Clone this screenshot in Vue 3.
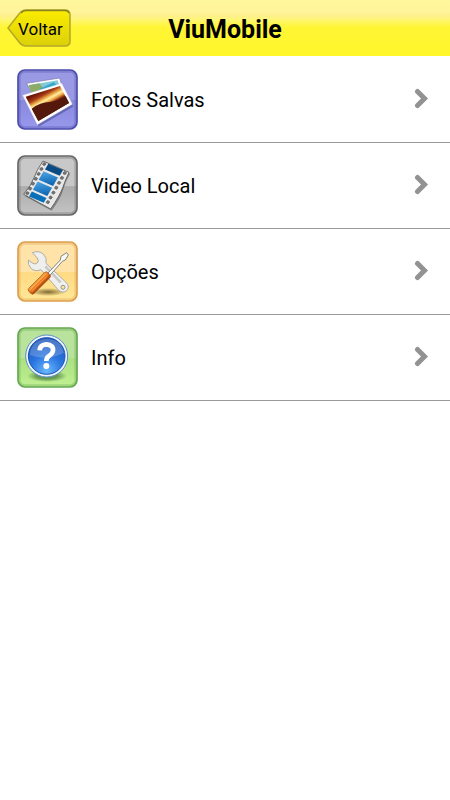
<script setup>
const items = [
  { id: 'photos', label: 'Fotos Salvas', top: '#9a9ae4', bottom: '#8888dd', low: '#9898ec', edge: '#4c4cac' },
  { id: 'video', label: 'Video Local', top: '#c8c8c8', bottom: '#acacac', low: '#c4c4c4', edge: '#666666' },
  { id: 'options', label: 'Opções', top: '#ffe3a8', bottom: '#ffda82', low: '#ffe897', edge: '#dd9e4c' },
  { id: 'info', label: 'Info', top: '#b9e29c', bottom: '#abe080', low: '#c0f092', edge: '#64a850' },
]
const holes = [6, 23, 40, 57, 74, 91, 107]
</script>

<template>
  <div class="page">
    <header class="bar">
      <button class="back" type="button">
        <svg class="back-shape" viewBox="0 0 64 38" aria-hidden="true">
          <defs>
            <linearGradient id="back-fill" x1="0" y1="0" x2="0" y2="1">
              <stop offset="0" stop-color="#fbec00" />
              <stop offset="1" stop-color="#dcd00a" />
            </linearGradient>
          </defs>
          <path d="M1 19 L12 5 Q15 1 19 1 H58 Q63 1 63 6 V32 Q63 37 58 37 H19 Q15 37 12 33 Z" fill="url(#back-fill)" stroke="#b3a828" stroke-width="1.5" />
          <path d="M14 4 Q16 1.5 19 1.5 H58 Q61 1.5 62 4" fill="none" stroke="#8b8222" stroke-width="1.5" />
        </svg>
        <span class="back-label">Voltar</span>
      </button>
      <h1 class="title">ViuMobile</h1>
    </header>

    <nav class="list">
      <a v-for="item in items" :key="item.id" class="row" href="#">
        <svg class="icon" viewBox="0 0 183 183" aria-hidden="true">
          <defs>
            <linearGradient :id="item.id + '-bg'" x1="0" y1="0" x2="0" y2="1">
              <stop offset="0" :stop-color="item.top" />
              <stop offset="0.5" :stop-color="item.top" />
              <stop offset="0.52" :stop-color="item.bottom" />
              <stop offset="1" :stop-color="item.low" />
            </linearGradient>
            <linearGradient id="sunset" gradientUnits="userSpaceOnUse" x1="74" y1="64" x2="112" y2="134">
              <stop offset="0" stop-color="#6a1208" />
              <stop offset="0.18" stop-color="#a23a14" />
              <stop offset="0.3" stop-color="#e8a040" />
              <stop offset="0.4" stop-color="#fff0a0" />
              <stop offset="0.5" stop-color="#eda040" />
              <stop offset="0.6" stop-color="#7a2810" />
              <stop offset="1" stop-color="#4a1008" />
            </linearGradient>
            <linearGradient id="film-blue" x1="0" y1="0" x2="1" y2="1">
              <stop offset="0" stop-color="#4ba5e4" />
              <stop offset="1" stop-color="#0860ae" />
            </linearGradient>
            <linearGradient id="handle" x1="0" y1="0" x2="1" y2="0">
              <stop offset="0" stop-color="#ffad48" />
              <stop offset="0.5" stop-color="#ed761c" />
              <stop offset="1" stop-color="#a84008" />
            </linearGradient>
            <radialGradient id="ball" cx="0.5" cy="0.9" r="0.85">
              <stop offset="0" stop-color="#69b8ff" />
              <stop offset="0.5" stop-color="#2b76e0" />
              <stop offset="1" stop-color="#1f55b8" />
            </radialGradient>
            <radialGradient id="shade">
              <stop offset="0" stop-color="#5e4a18" stop-opacity="0.8" />
              <stop offset="1" stop-color="#5e4a18" stop-opacity="0" />
            </radialGradient>
            <radialGradient id="ball-shade">
              <stop offset="0.5" stop-color="#31642a" stop-opacity="0.6" />
              <stop offset="1" stop-color="#31642a" stop-opacity="0" />
            </radialGradient>
          </defs>
          <rect x="3" y="3" width="177" height="177" rx="21" :fill="`url(#${item.id}-bg)`" :stroke="item.edge" stroke-width="5" />
          <rect x="8" y="8" width="167" height="167" rx="16" fill="none" :stroke="item.edge" stroke-opacity="0.35" stroke-width="6" />

          <g v-if="item.id === 'photos'">
            <path d="M29 43 L128 27 L143 80 L60 105 Z" fill="#fff" stroke="#7773ae" stroke-width="2" />
            <path d="M35 49 L122 34 L133 70 L50 92 Z" fill="#83c9d8" />
            <path d="M35 49 L67 43 L78 56 L60 82 L47 84 Z" fill="#8caa68" />
            <path d="M67 60 L110 40 L127 55 L90 62 Z" fill="#31a8cc" />
            <path d="M65 173 L168 113 L166 104 L61 162 Z" fill="#40408c" opacity="0.5" />
            <path d="M17 79 L134 43 L166 106 L61 167 Z" fill="#fff" stroke="#d2cce0" stroke-width="1" />
            <path d="M26 83 L129 51 L156 102 L64 156 Z" fill="url(#sunset)" />
            <path d="M44 119 Q70 99 98 99 Q124 96 146 82 L156 102 L64 156 Z" fill="#54180c" />
          </g>

          <g v-else-if="item.id === 'video'">
            <path d="M82 23 L160 56 Q144 82 138 106 T104 167 L24 124 Z" fill="#333" opacity="0.4" />
            <path d="M78 18 L156 52 Q145 75 137 98 T101 162 L20 118 Q43 91 51 68 T78 18 Z" fill="#e8e8e8" stroke="#555" stroke-width="2.5" />
            <g transform="matrix(.917 .4 -.5 .865 78 18)">
              <rect x="18" y="1" width="48" height="20" fill="#0b4b83" />
              <rect x="17" y="28" width="47" height="29" fill="url(#film-blue)" />
              <rect x="17" y="63" width="47" height="29" fill="url(#film-blue)" />
              <rect x="17" y="98" width="48" height="17" fill="#0870b8" />
              <g v-for="y in holes" :key="y" fill="#777" stroke="#555" stroke-width="2">
                <rect x="4" :y="y - 3" width="8" height="8" rx="2" />
                <rect x="71" :y="y - 3" width="8" height="8" rx="2" />
              </g>
            </g>
          </g>

          <g v-else-if="item.id === 'options'">
            <ellipse cx="93" cy="153" rx="54" ry="12" fill="url(#shade)" />
            <path d="M46 35 Q66 27 80 40 Q91 52 87 67 L150 127 Q159 139 148 150 Q136 158 123 146 L72 86 Q54 94 41 81 Q32 71 34 57 L46 66 Q54 72 61 66 Q67 60 61 51 Z" fill="#efefed" stroke="#aeaea8" stroke-width="3" />
            <path d="M85 76 L131 124" stroke="#c9c9c5" stroke-width="8" />
            <circle cx="138" cy="139" r="6" fill="#ffe3a0" stroke="#94948c" stroke-width="3" />
            <path d="M91 98 L130 57 L132 46 L149 35 L154 42 L145 57 L136 61 L98 104 Z" fill="#f8f8f5" stroke="#85857e" stroke-width="3" />
            <g transform="rotate(45 67 126)">
              <rect x="56" y="86" width="22" height="80" rx="7" fill="url(#handle)" stroke="#974008" stroke-width="2" />
              <path d="M62 93 V159 M69 93 V159" stroke="#ffc165" stroke-width="2" />
            </g>
          </g>

          <g v-else>
            <ellipse cx="90" cy="147" rx="60" ry="18" fill="url(#ball-shade)" />
            <circle cx="89" cy="87" r="63" fill="#eef5ff" stroke="#5a8ccb" stroke-width="3" />
            <circle cx="89" cy="87" r="55" fill="url(#ball)" stroke="#1a55b4" stroke-width="3" />
            <path d="M38 84 Q43 38 89 35 Q135 38 140 78 Q91 103 38 84 Z" fill="#fff" opacity="0.2" />
            <path d="M68 70 Q69 53 88 52 Q110 54 108 71 Q106 81 97 86 Q88 91 88 102" fill="none" stroke="#fff" stroke-width="14" />
            <circle cx="88" cy="117" r="9" fill="#fff" />
          </g>
        </svg>
        <span class="label">{{ item.label }}</span>
        <svg class="chevron" viewBox="0 0 16 24" aria-hidden="true">
          <path d="M3.5 3.5 L10.5 10.5 L3.5 17.5" fill="none" stroke="#929292" stroke-width="5" stroke-linecap="round" />
        </svg>
      </a>
    </nav>
  </div>
</template>

<style>
body {
  margin: 0;
  background: #fff;
}
</style>

<style scoped>
.page {
  font-family: Roboto, "Liberation Sans", sans-serif;
  color: #000;
}
.bar {
  display: grid;
  grid-template-columns: 72px 1fr 72px;
  align-items: center;
  height: 56px;
  background: linear-gradient(#fff79c 0, #fff49a 12px, #fdef8c 16px, #fff67a 19px, #fff535 27px, #fff62b 100%);
}
.back {
  display: grid;
  align-items: center;
  width: 64px;
  height: 38px;
  margin-left: 7px;
  padding: 0;
  border: 0;
  background: none;
  font: inherit;
  color: inherit;
}
.back-shape,
.back-label {
  grid-area: 1 / 1;
}
.back-shape {
  width: 64px;
  height: 38px;
}
.back-label {
  padding-left: 11px;
  padding-top: 2px;
  font-size: 17px;
  line-height: 20px;
  text-align: left;
}
.title {
  margin: 0;
  padding-top: 4px;
  font-size: 25px;
  line-height: 32px;
  font-weight: 700;
  text-align: center;
}
.list {
  padding-top: 1px;
}
.row {
  display: flex;
  align-items: center;
  height: 85px;
  padding: 0 20px 0 17px;
  border-bottom: 1px solid #999;
  color: inherit;
  text-decoration: none;
}
.icon {
  width: 61px;
  height: 61px;
}
.label {
  flex: 1;
  padding-left: 13px;
  font-size: 20px;
  line-height: 24px;
}
.chevron {
  width: 16px;
  height: 24px;
}
</style>
